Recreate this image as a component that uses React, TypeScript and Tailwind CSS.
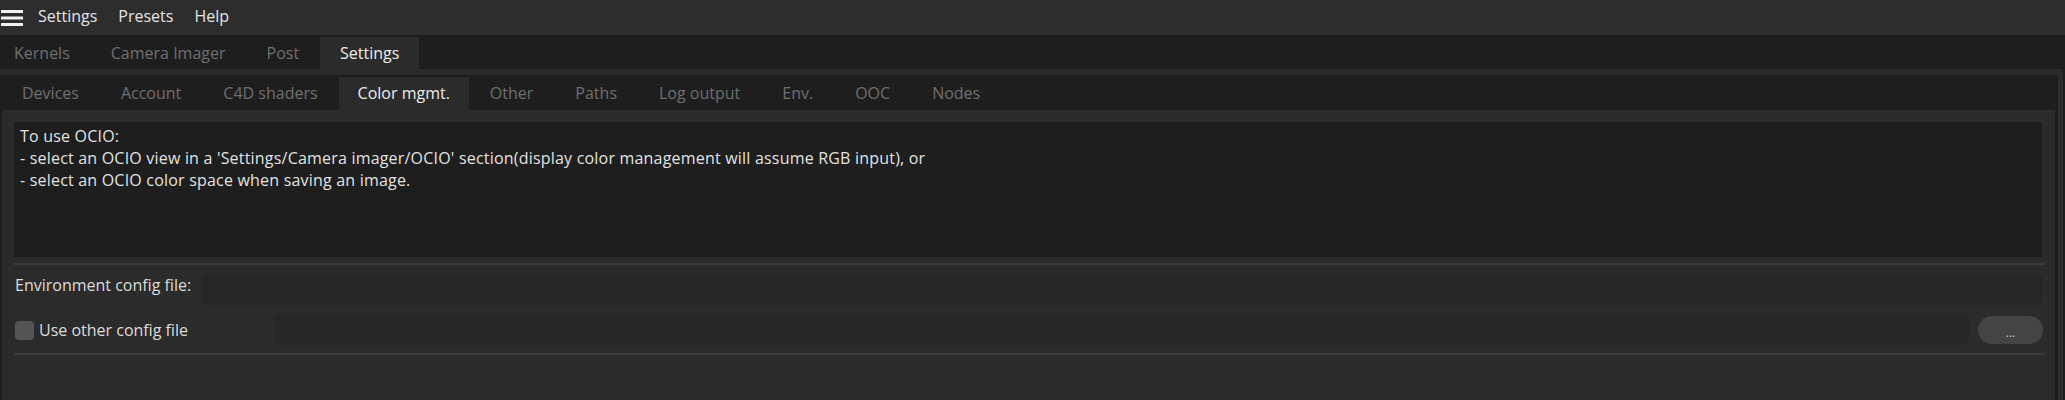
const mainTabs = ["Kernels", "Camera Imager", "Post", "Settings"];
const subTabs = [
  "Devices",
  "Account",
  "C4D shaders",
  "Color mgmt.",
  "Other",
  "Paths",
  "Log output",
  "Env.",
  "OOC",
  "Nodes",
];

const font = { fontFamily: '"Open Sans", "Noto Sans CJK KR", sans-serif' };

const Hamburger = () => (
  <svg width="23" height="18" viewBox="0 0 23 18" className="ml-[1px]">
    <rect x="0" y="1" width="22" height="3" fill="#f2f2f2" />
    <rect x="0" y="7.5" width="22" height="3" fill="#f2f2f2" />
    <rect x="0" y="14" width="22" height="3" fill="#f2f2f2" />
  </svg>
);

export default function App() {
  return (
    <div
      className="w-[2065px] h-[400px] bg-[#1e1e1e] flex flex-col overflow-hidden text-[16px]"
      style={font}
    >
      {/* Menu bar */}
      <div className="h-[35px] bg-[#2d2d2d] flex items-center shrink-0">
        <Hamburger />
        <div className="flex items-center gap-[21px] ml-[14px] -mt-[4px] text-[16px] text-[#e4e4e4]">
          <span>Settings</span>
          <span>Presets</span>
          <span>Help</span>
        </div>
      </div>

      {/* Main tabs */}
      <div className="h-[34px] flex items-end shrink-0 bg-[#1e1e1e]">
        {mainTabs.map((t, i) => {
          const active = t === "Settings";
          return (
            <div
              key={t}
              className={
                active
                  ? "h-[32px] px-[20px] flex items-center bg-[#2b2b2b] text-[#ececec]"
                  : i === 0
                  ? "h-[32px] pl-[14px] pr-[21px] flex items-center text-[#6f6f6f]"
                  : i === 1
                  ? "h-[32px] px-[20px] flex items-center text-[#6f6f6f]"
                  : "h-[32px] px-[21px] flex items-center text-[#6f6f6f]"
              }
            >
              {t}
            </div>
          );
        })}
      </div>

      {/* Settings panel */}
      <div className="flex-1 mr-[2px] bg-[#2b2b2b] pt-[6px] pr-[5px] flex">
        <div className="flex-1 bg-[#1e1e1e] flex flex-col">
          {/* Sub tabs */}
          <div className="h-[35px] flex items-end pl-[1px] shrink-0">
            {subTabs.map((t) => {
              const active = t === "Color mgmt.";
              return (
                <div
                  key={t}
                  className={
                    active
                      ? "h-[33px] px-[19px] pb-[2px] flex items-center bg-[#2b2b2b] text-[#ececec]"
                      : "h-[33px] px-[21px] pb-[2px] flex items-center text-[#6f6f6f]"
                  }
                >
                  {t}
                </div>
              );
            })}
          </div>

          {/* Content */}
          <div className="flex-1 ml-[2px] mr-[3px] bg-[#2b2b2b] px-[12px] pt-[12px] flex flex-col">
            <div className="h-[135px] bg-[#1e1e1e] mr-[1px] pt-[3px] px-[6px] leading-[22px] tracking-[0.2px] text-[#e2e2e2]">
              <div>To use OCIO:</div>
              <div>
                - select an OCIO view in a 'Settings/Camera imager/OCIO' section(display color management will assume RGB input), or
              </div>
              <div>- select an OCIO color space when saving an image.</div>
            </div>

            <div className="h-[2px] bg-[#3a3a3a] mt-[6px] -mr-[2px]" />

            <div className="flex items-start mt-[10px]">
              <span className="ml-[1px] leading-[20px] text-[#dcdcdc]">Environment config file:</span>
              <div className="flex-1 h-[30px] ml-[10px] rounded-[5px] bg-[#272727]" />
            </div>

            <div className="flex items-center mt-[10px]">
              <div className="w-[260px] flex items-center">
                <div className="ml-[1px] w-[19px] h-[19px] rounded-[4px] bg-[#555555]" />
                <span className="ml-[5px] text-[#dcdcdc]">Use other config file</span>
              </div>
              <div className="flex-1 h-[30px] rounded-[5px] bg-[#272727]" />
              <button className="ml-[9px] w-[65px] h-[28px] rounded-full bg-[#444444] text-[#c8d0dc] text-[12px] leading-none pt-[6px]">
                ...
              </button>
            </div>

            <div className="h-[2px] bg-[#3a3a3a] mt-[8px] -mr-[2px]" />
          </div>
        </div>
      </div>
    </div>
  );
}
